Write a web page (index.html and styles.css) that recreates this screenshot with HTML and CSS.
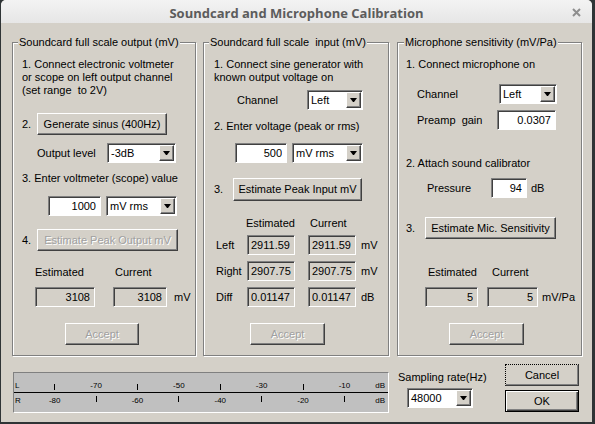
FILE: index.html
```html
<!DOCTYPE html>
<html lang="en">
<head>
    <meta charset="UTF-8">
    <title>Soundcard and Microphone Calibration</title>
    <link rel="stylesheet" href="styles.css">
</head>
<body>
    <div class="window">
        <div class="titlebar">
            <span></span>
            <span class="title">Soundcard and Microphone Calibration</span>
            <svg class="close" width="9" height="9" viewBox="0 0 9 9"><path d="M1 1L8 8M8 1L1 8" stroke="#8e8e8e" stroke-width="2"/></svg>
        </div>

        <div class="client">
            <div class="groups">
                <!-- output -->
                <div class="group g-out">
                    <div class="caption">Soundcard full scale output (mV)</div>
                    <div class="text mt9">1. Connect electronic voltmeter<br>or scope on left output channel<br>(set range&nbsp; to 2V)</div>
                    <div class="row mt16"><span class="num">2.</span><button class="btn w130">Generate sinus (400Hz)</button></div>
                    <div class="row mt8">
                        <span class="ml24 w70">Output level</span>
                        <div class="combo w69"><span class="val">-3dB</span><span class="drop"></span></div>
                    </div>
                    <div class="text mt9">3. Enter voltmeter (scope) value</div>
                    <div class="row mt11">
                        <input class="edit ml35 w53" value="1000">
                        <div class="combo ml5 w71"><span class="val">mV rms</span><span class="drop"></span></div>
                    </div>
                    <div class="row mt13"><span class="num">4.</span><button class="btn w141" disabled>Estimate Peak Output mV</button></div>
                    <div class="row mt15"><span class="ml22 w80">Estimated</span><span>Current</span></div>
                    <div class="row mt8">
                        <input class="edit ro ml22 w60" value="3108" readonly>
                        <input class="edit ro ml18 w54" value="3108" readonly>
                        <span class="ml7">mV</span>
                    </div>
                    <div class="row mt16"><button class="btn ml52 w74" disabled>Accept</button></div>
                </div>

                <!-- input -->
                <div class="group g-in">
                    <div class="caption">Soundcard full scale&nbsp; input (mV)</div>
                    <div class="text mt9">1. Connect sine generator with<br>known output voltage on</div>
                    <div class="row mt6">
                        <span class="ml33 w70">Channel</span>
                        <div class="combo w56"><span class="val">Left</span><span class="drop"></span></div>
                    </div>
                    <div class="text mt10">2. Enter voltage (peak or rms)</div>
                    <div class="row mt10">
                        <input class="edit ml31 w52" value="500">
                        <div class="combo ml5 w71"><span class="val">mV rms</span><span class="drop"></span></div>
                    </div>
                    <div class="row mt15"><span class="num">3.</span><button class="btn tall w129">Estimate Peak Input mV</button></div>
                    <div class="row mt16"><span class="ml42 w64">Estimated</span><span>Current</span></div>
                    <div class="row mt5">
                        <span class="ml12 w31">Left</span>
                        <input class="edit ro left w48" value="2911.59" readonly>
                        <input class="edit ro left ml13 w48" value="2911.59" readonly>
                        <span class="ml5">mV</span>
                    </div>
                    <div class="row mt6">
                        <span class="ml12 w31">Right</span>
                        <input class="edit ro left w48" value="2907.75" readonly>
                        <input class="edit ro left ml13 w48" value="2907.75" readonly>
                        <span class="ml5">mV</span>
                    </div>
                    <div class="row mt6">
                        <span class="ml12 w31">Diff</span>
                        <input class="edit ro left w48" value="0.01147" readonly>
                        <input class="edit ro left ml13 w48" value="0.01147" readonly>
                        <span class="ml5">dB</span>
                    </div>
                    <div class="row mt16"><button class="btn ml46 w75" disabled>Accept</button></div>
                </div>

                <!-- microphone -->
                <div class="group g-mic">
                    <div class="caption">Microphone sensitivity (mV/Pa)</div>
                    <div class="text mt9">1. Connect microphone on</div>
                    <div class="row mt13">
                        <span class="ml19 w82">Channel</span>
                        <div class="combo w58"><span class="val">Left</span><span class="drop"></span></div>
                    </div>
                    <div class="row mt6">
                        <span class="ml19 w80">Preamp&nbsp; gain</span>
                        <input class="edit w59" value="0.0307">
                    </div>
                    <div class="text mt27">2. Attach sound calibrator</div>
                    <div class="row mt8">
                        <span class="ml29 w64">Pressure</span>
                        <input class="edit w36" value="94">
                        <span class="ml4">dB</span>
                    </div>
                    <div class="row mt19"><span class="num">3.</span><button class="btn w131">Estimate Mic. Sensitivity</button></div>
                    <div class="row mt27"><span class="ml30 w64">Estimated</span><span>Current</span></div>
                    <div class="row mt8">
                        <input class="edit ro ml27 w53" value="5" readonly>
                        <input class="edit ro ml9 w51" value="5" readonly>
                        <span class="ml4">mV/Pa</span>
                    </div>
                    <div class="row mt16"><button class="btn ml51 w75" disabled>Accept</button></div>
                </div>
            </div>

            <div class="bottom">
                <div class="meter">
                    <div class="mrow mrow-l">
                        <span class="ch">L</span>
                        <span class="cell"><i class="tick"></i></span>
                        <span class="cell">-70</span>
                        <span class="cell"><i class="tick"></i></span>
                        <span class="cell">-50</span>
                        <span class="cell"><i class="tick"></i></span>
                        <span class="cell">-30</span>
                        <span class="cell"><i class="tick"></i></span>
                        <span class="cell">-10</span>
                        <span class="db">dB</span>
                    </div>
                    <div class="mrow mrow-r">
                        <span class="ch">R</span>
                        <span class="cell">-80</span>
                        <span class="cell"><i class="tick"></i></span>
                        <span class="cell">-60</span>
                        <span class="cell"><i class="tick"></i></span>
                        <span class="cell">-40</span>
                        <span class="cell"><i class="tick"></i></span>
                        <span class="cell">-20</span>
                        <span class="cell"><i class="tick"></i></span>
                        <span class="db">dB</span>
                    </div>
                </div>

                <div class="rate">
                    <div>Sampling rate(Hz)</div>
                    <div class="combo ml9 mt4 w66"><span class="val">48000</span><span class="drop"></span></div>
                </div>

                <div class="actions">
                    <button class="btn cancel">Cancel</button>
                    <button class="btn ok">OK</button>
                </div>
            </div>
        </div>
    </div>
</body>
</html>
```

FILE: styles.css
```css
body {
    margin: 0;
    background-color: #2f3436;
    font-family: "Liberation Sans", Arial, sans-serif;
    font-size: 11px;
    line-height: 13px;
    color: #000;
}

.window {
    width: 591px;
    height: 422px;
    margin-left: 1px;
    background-color: #d4d0c8;
    border-radius: 5px 5px 0 0;
    overflow: hidden;
}

.titlebar {
    display: grid;
    grid-template-columns: 1fr auto 1fr;
    align-items: center;
    height: 23px;
    padding-top: 3px;
    box-sizing: border-box;
    background: linear-gradient(#f3f3f3, #e6e6e6);
}

.title {
    font-family: "Open Sans", "DejaVu Sans", sans-serif;
    font-weight: bold;
    font-size: 13px;
    color: #5c5c5c;
}

.close {
    justify-self: end;
    margin: 0 11px 2px 0;
}

.client {
    padding: 19px 0 0 11px;
}

.groups {
    display: flex;
}

/* etched group box */
.group {
    box-sizing: border-box;
    height: 314px;
    border: 1px solid #808080;
    box-shadow: inset 1px 1px #fff, 1px 1px #fff;
    display: flex;
    flex-direction: column;
    align-items: flex-start;
}

.g-out { width: 184px; }
.g-in { width: 186px; margin-left: 7px; }
.g-mic { width: 185px; margin-left: 8px; }

.caption {
    margin: -7px 0 0 5px;
    padding: 0 1px;
    background-color: #d4d0c8;
    white-space: nowrap;
}

.g-mic .caption { margin-left: 6px; }

.text { margin-left: 9px; }
.g-in .text { margin-left: 10px; }
.g-mic .text { margin-left: 8px; }

.row {
    display: flex;
    align-items: center;
    white-space: nowrap;
}

.num { margin-left: 9px; width: 15px; }
.g-in .num { margin-left: 10px; width: 19px; }
.g-mic .num { margin-left: 8px; width: 19px; }

/* raised button */
.btn {
    box-sizing: border-box;
    height: 22px;
    padding: 0;
    border: 1px solid;
    border-color: #fff #404040 #404040 #fff;
    box-shadow: inset -1px -1px #808080;
    background-color: #d4d0c8;
    font: inherit;
    color: #000;
}

.btn.tall { height: 23px; }

.btn:disabled {
    color: #a0a0a0;
    text-shadow: 1px 1px #fff;
}

/* sunken edit */
.edit {
    box-sizing: border-box;
    height: 20px;
    margin-top: 0;
    margin-bottom: 0;
    padding: 0 4px 0 2px;
    border: 1px solid;
    border-color: #808080 #fff #fff #808080;
    box-shadow: inset 1px 1px #404040;
    background-color: #fff;
    font: inherit;
    color: #000;
    text-align: right;
    outline: none;
}

.edit.ro { background-color: #d4d0c8; }
.edit.left { text-align: left; padding: 0 1px 0 3px; }

.combo {
    box-sizing: border-box;
    display: flex;
    align-items: center;
    height: 20px;
    padding: 1px;
    border: 1px solid;
    border-color: #808080 #fff #fff #808080;
    box-shadow: inset 1px 1px #404040;
    background-color: #fff;
}

.combo .val {
    flex: 1;
    padding-left: 2px;
    overflow: hidden;
}

.drop {
    box-sizing: border-box;
    display: flex;
    align-items: center;
    justify-content: center;
    width: 15px;
    height: 16px;
    border: 1px solid;
    border-color: #fff #404040 #404040 #fff;
    box-shadow: inset -1px -1px #808080;
    background-color: #d4d0c8;
}

.drop::after {
    content: "";
    width: 1px;
    border-left: 3px solid transparent;
    border-right: 3px solid transparent;
    border-top: 4px solid #000;
}

/* level meter */
.bottom {
    display: flex;
    align-items: flex-start;
    margin-top: 8px;
}

.meter {
    box-sizing: border-box;
    width: 376px;
    height: 41px;
    margin: 8px 0 0 1px;
    border: 1px solid;
    border-color: #808080 #fff #fff #808080;
    background-color: #c0c0c0;
    font-size: 8px;
    line-height: 8px;
}

.mrow {
    display: flex;
    box-sizing: border-box;
    height: 19px;
}

.mrow-l {
    height: 20px;
    align-items: flex-end;
    padding-bottom: 2px;
    border-bottom: 1px solid #000;
}

.mrow-r {
    align-items: flex-start;
    padding-top: 3px;
}

.ch {
    width: 19px;
    padding-left: 1px;
}

.cell {
    width: 41.4px;
    display: flex;
    justify-content: center;
}

.mrow-r .ch,
.mrow-r .cell,
.mrow-r .db { margin-top: 1px; }
.mrow-r .cell .tick { margin-top: -1px; }

.tick {
    display: block;
    width: 1px;
    height: 6px;
    background-color: #000;
}

.db {
    margin-left: auto;
    padding-right: 3px;
}

.rate {
    width: 107px;
    margin: 7px 0 0 9px;
    white-space: nowrap;
}

.actions {
    display: flex;
    flex-direction: column;
    gap: 4px;
    width: 74px;
}

.actions .btn { width: 74px; }

.cancel {
    border-style: dotted solid solid dotted;
    border-color: #000 #404040 #404040 #000;
}

.ok {
    border-color: #000;
    box-shadow: inset 1px 1px #fff, inset -1px -1px #404040, inset -2px -2px #808080;
}

/* spacing */
.mt4 { margin-top: 4px; }
.mt5 { margin-top: 5px; }
.mt6 { margin-top: 6px; }
.mt8 { margin-top: 8px; }
.mt9 { margin-top: 9px; }
.mt10 { margin-top: 10px; }
.mt11 { margin-top: 11px; }
.mt13 { margin-top: 13px; }
.mt15 { margin-top: 15px; }
.mt16 { margin-top: 16px; }
.mt19 { margin-top: 19px; }
.mt27 { margin-top: 27px; }

.ml4 { margin-left: 4px; }
.ml5 { margin-left: 5px; }
.ml7 { margin-left: 7px; }
.ml9 { margin-left: 9px; }
.ml12 { margin-left: 12px; }
.ml13 { margin-left: 13px; }
.ml18 { margin-left: 18px; }
.ml19 { margin-left: 19px; }
.ml22 { margin-left: 22px; }
.ml24 { margin-left: 24px; }
.ml27 { margin-left: 27px; }
.ml29 { margin-left: 29px; }
.ml30 { margin-left: 30px; }
.ml31 { margin-left: 31px; }
.ml33 { margin-left: 33px; }
.ml35 { margin-left: 35px; }
.ml42 { margin-left: 42px; }
.ml46 { margin-left: 46px; }
.ml51 { margin-left: 51px; }
.ml52 { margin-left: 52px; }

.w31 { width: 31px; }
.w36 { width: 36px; }
.w48 { width: 48px; }
.w51 { width: 51px; }
.w52 { width: 52px; }
.w53 { width: 53px; }
.w54 { width: 54px; }
.w56 { width: 56px; }
.w58 { width: 58px; }
.w59 { width: 59px; }
.w60 { width: 60px; }
.w64 { width: 64px; }
.w66 { width: 66px; }
.w69 { width: 69px; }
.w70 { width: 70px; }
.w71 { width: 71px; }
.w74 { width: 74px; }
.w75 { width: 75px; }
.w80 { width: 80px; }
.w82 { width: 82px; }
.w129 { width: 129px; }
.w130 { width: 130px; }
.w131 { width: 131px; }
.w141 { width: 141px; }
```
